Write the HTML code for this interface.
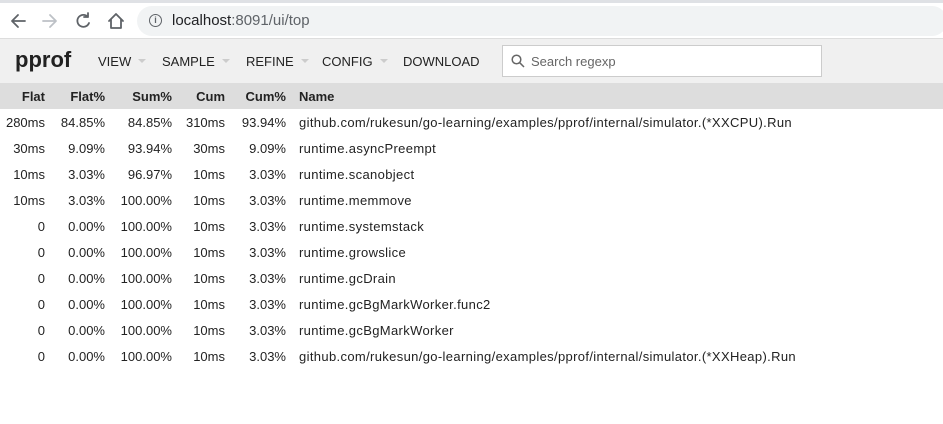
<!DOCTYPE html>
<html><head><style>
body{margin:0;width:943px;height:424px;overflow:hidden;background:#fff;font-family:"Liberation Sans",Arial,sans-serif;color:#222}
.chrome{position:absolute;left:0;top:0;width:943px;height:38px;background:#fff;border-top:3px solid #dfe1e5;box-sizing:border-box}
.addr{position:absolute;left:137px;top:3px;width:810px;height:30px;background:#f1f3f4;border-radius:15px;font-size:15px;line-height:30px;color:#202124}
.addr .i{position:absolute;left:12px;top:8px;width:11px;height:11px;border:1.3px solid #5f6368;border-radius:50%;font-size:9px;line-height:11px;text-align:center;color:#5f6368;font-weight:bold}
.hdr{position:absolute;left:0;top:38px;width:943px;height:45px;background:#f0f0f0;border-top:1px solid #ddd;box-sizing:border-box}
.logo{position:absolute;left:15px;top:8px;font-size:22px;font-weight:bold;color:#222}
.menu{position:absolute;top:15px;font-size:13px;color:#222}
.menu .c{display:inline-block;width:0;height:0;border-left:4px solid transparent;border-right:4px solid transparent;border-top:4px solid #ccc;margin-left:7px;vertical-align:3px}
.search{position:absolute;left:502px;top:6px;width:320px;height:32px;background:#fff;border:1px solid #ccc;box-sizing:border-box;font-size:13px;color:#666;line-height:32px;padding-left:28px}
table{position:absolute;left:0;top:83px;border-collapse:collapse;font-size:13px;width:943px}
th{background:#ddd;height:26px;font-weight:bold;padding:0}
td{height:26px;padding:0}
td:last-child{letter-spacing:0.35px}
.r{text-align:right}
</style></head><body>
<div class="chrome">
<svg style="position:absolute;left:10px;top:9px" width="120" height="20" viewBox="0 0 120 20" fill="none" stroke-width="1.8" stroke-linecap="round" stroke-linejoin="round">
<path d="M2 9H15M2 9L8 3M2 9L8 15" stroke="#5f6368"/>
<path d="M33 9H46M46 9L40 3M46 9L40 15" stroke="#bdc1c6"/>
<path d="M78 5A6 6 0 1 0 79 11M78 1V5H74" stroke="#5f6368"/>
<path d="M99 9L106 2L113 9M101 7V16H111V7" stroke="#5f6368"/>
</svg>
<div class="addr"><span class="i">i</span><span style="position:absolute;left:35px">localhost<span style="color:#5f6368">:8091/ui/top</span></span></div>
</div>
<div class="hdr">
<div class="logo">pprof</div>
<div class="menu" style="left:98px">VIEW<span class="c"></span></div>
<div class="menu" style="left:162px">SAMPLE<span class="c"></span></div>
<div class="menu" style="left:246px">REFINE<span class="c"></span></div>
<div class="menu" style="left:322px">CONFIG<span class="c"></span></div>
<div class="menu" style="left:403px">DOWNLOAD</div>
<div class="search"><svg style="position:absolute;left:8px;top:8px" width="14" height="14" viewBox="0 0 14 14" fill="none" stroke="#666" stroke-width="1.5"><circle cx="5.5" cy="5.5" r="4.3"/><path d="M8.7 8.7L13 13"/></svg>Search regexp</div>
</div>
<table>
<colgroup><col style="width:45px"><col style="width:60px"><col style="width:67px"><col style="width:53px"><col style="width:61px"><col style="width:13px"><col></colgroup>
<tr><th class="r">Flat</th><th class="r">Flat%</th><th class="r">Sum%</th><th class="r">Cum</th><th class="r">Cum%</th><th></th><th style="text-align:left">Name</th></tr>
<tr><td class="r">280ms</td><td class="r">84.85%</td><td class="r">84.85%</td><td class="r">310ms</td><td class="r">93.94%</td><td></td><td>github.com/rukesun/go-learning/examples/pprof/internal/simulator.(*XXCPU).Run</td></tr>
<tr><td class="r">30ms</td><td class="r">9.09%</td><td class="r">93.94%</td><td class="r">30ms</td><td class="r">9.09%</td><td></td><td>runtime.asyncPreempt</td></tr>
<tr><td class="r">10ms</td><td class="r">3.03%</td><td class="r">96.97%</td><td class="r">10ms</td><td class="r">3.03%</td><td></td><td>runtime.scanobject</td></tr>
<tr><td class="r">10ms</td><td class="r">3.03%</td><td class="r">100.00%</td><td class="r">10ms</td><td class="r">3.03%</td><td></td><td>runtime.memmove</td></tr>
<tr><td class="r">0</td><td class="r">0.00%</td><td class="r">100.00%</td><td class="r">10ms</td><td class="r">3.03%</td><td></td><td>runtime.systemstack</td></tr>
<tr><td class="r">0</td><td class="r">0.00%</td><td class="r">100.00%</td><td class="r">10ms</td><td class="r">3.03%</td><td></td><td>runtime.growslice</td></tr>
<tr><td class="r">0</td><td class="r">0.00%</td><td class="r">100.00%</td><td class="r">10ms</td><td class="r">3.03%</td><td></td><td>runtime.gcDrain</td></tr>
<tr><td class="r">0</td><td class="r">0.00%</td><td class="r">100.00%</td><td class="r">10ms</td><td class="r">3.03%</td><td></td><td>runtime.gcBgMarkWorker.func2</td></tr>
<tr><td class="r">0</td><td class="r">0.00%</td><td class="r">100.00%</td><td class="r">10ms</td><td class="r">3.03%</td><td></td><td>runtime.gcBgMarkWorker</td></tr>
<tr><td class="r">0</td><td class="r">0.00%</td><td class="r">100.00%</td><td class="r">10ms</td><td class="r">3.03%</td><td></td><td>github.com/rukesun/go-learning/examples/pprof/internal/simulator.(*XXHeap).Run</td></tr>
</table>
</body></html>
